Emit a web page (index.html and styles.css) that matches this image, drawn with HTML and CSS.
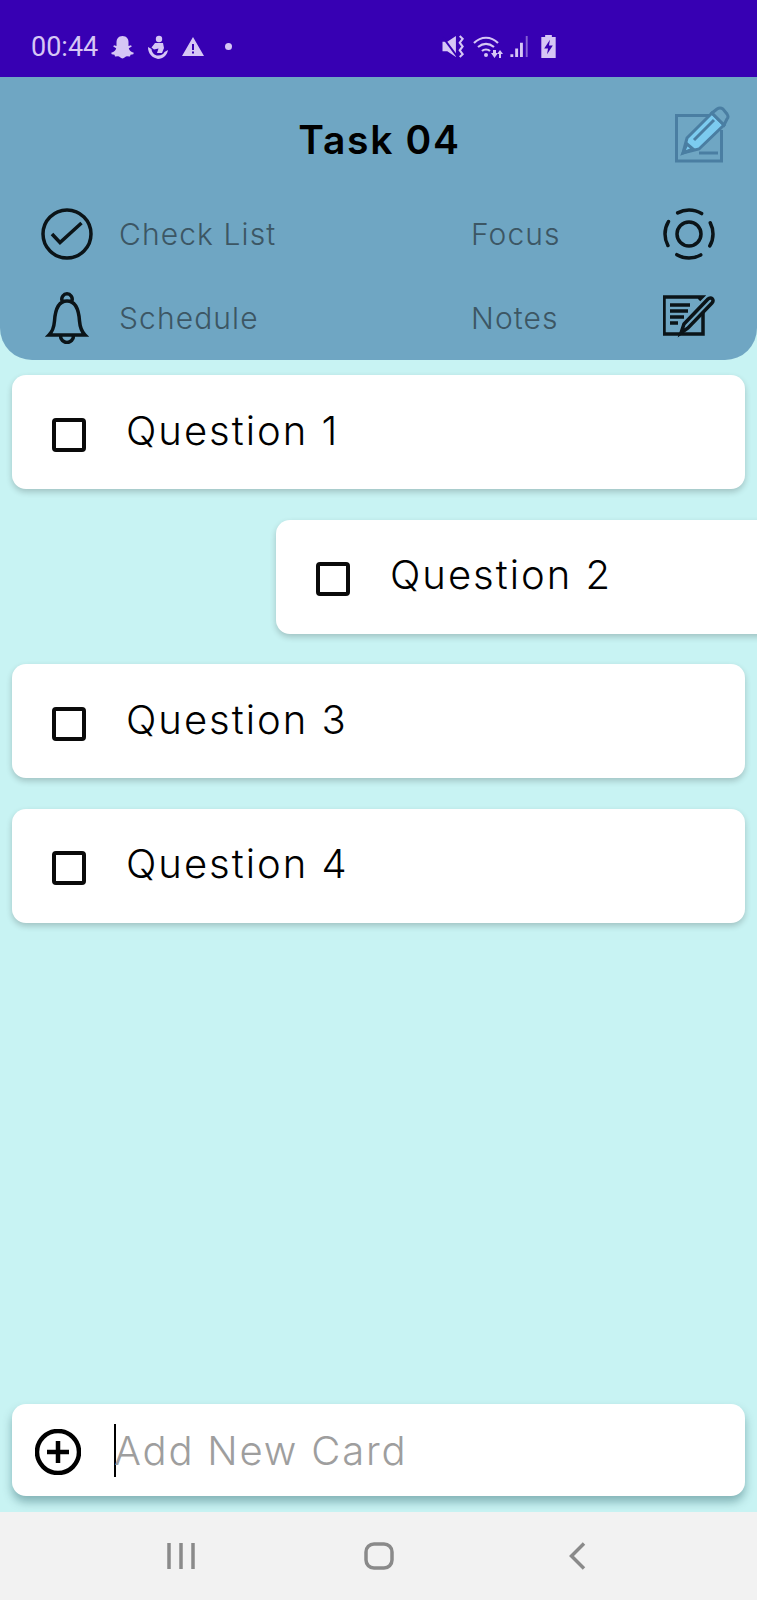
FILE: index.html
```html
<!DOCTYPE html>
<html lang="en">

<head>
    <meta charset="UTF-8">
    <meta name="viewport" content="width=device-width, initial-scale=1.0">
    <title>Task 04</title>
    <link rel="stylesheet" href="styles.css">
</head>

<body>
    <div class="status-bar">
        <div class="status-left">
            <span class="time">00:44</span>
            <svg class="st-ghost" viewBox="0 0 24 24"><path d="M12 1c4 0 6 3 6 6v4l2.500-.8.800 1.300-3 1.800c.5 2 2 3.500 5 4.500l-.5 1.400-2.800.6-.5 1.700-3-.2c-1.500 0-2.500 2.200-4.500 2.200s-3-2.200-4.500-2.200l-3 .2-.5-1.700-2.800-.6-.5-1.400c3-1 4.500-2.500 5-4.500l-3-1.800.8-1.300L6 11V7c0-3 2-6 6-6z"/></svg>
            <svg class="st-anchor" viewBox="0 0 20 24"><circle cx="11" cy="4" r="3.200"/><path d="M7 8h8l1 5-2 5H9l1.500-4.500-4.500 1-2.500-2z"/><path d="M0 12c0 7 4 10.500 10 12 5-.5 9-3.500 10-9l-3.500 2c-1 2-3 3.500-6.500 3.500S4 18 3.500 14z"/></svg>
            <svg class="st-warn" viewBox="0 0 22 19"><path fill-rule="evenodd" d="M11 0l11 19H0zM10 7v6h2V7zM10 14.500v2h2v-2z"/></svg>
            <span class="st-dot"></span>
        </div>
        <div class="status-right">
            <svg class="st-mute" viewBox="0 0 24 24"><path d="M0 7h5l9-6v22l-9-6H0z"/><path d="M0 2l15 20" stroke="#3700b3" stroke-width="2"/><path class="wave" d="M18 1l3 3-3 4 3 4-3 4 3 4-3 3"/></svg>
            <svg class="st-wifi" viewBox="0 0 30 24"><path class="wave" d="M1 8c7-7 17-7 24 0M5 12c5-4 11-4 16 0M9 16c2-2 6-2 8 0"/><circle cx="13" cy="20" r="2"/><path d="M20 19h3v-4h-3zM18 18l3.500 5 3.500-5zM26 19h2v4h-2zM24 19l3-4 3 4z"/></svg>
            <svg class="st-signal" viewBox="0 0 20 24"><path d="M0 20h3v3H0zM5 14h3v9H5zM10 8h3v15h-3z"/><path opacity=".5" d="M16 1h2v22h-2z"/></svg>
            <svg class="st-batt" viewBox="0 0 15 24"><path fill-rule="evenodd" d="M4 0h7v2h4v22H0V2h4zM9 5L3 14h4l-1 6 6-9H8z"/></svg>
        </div>
    </div>

    <header class="task-header">
        <div class="title-row">
            <h1>Task 04</h1>
            <svg class="edit-icon" viewBox="0 0 56 58">
                <path class="edit-box" d="M38 9.500H2.500V55h45V24"/>
                <path class="edit-line" d="M25 47h19"/>
                <path class="edit-pen" d="M9 47l4-15L38 7l12 12-25 24z"/>
                <path class="edit-cap" d="M38 7l5-4q3-2 6 0l4 5q2 3 0 5l-3 6z"/>
                <path class="edit-line" d="M20 34l20-20M9 47l4-9 6 5z"/>
            </svg>
        </div>
        <div class="tool-row">
            <div class="tool">
                <svg class="tool-icon" viewBox="0 0 52 52"><circle cx="26" cy="26" r="24"/><path d="M11 26l8 8.500L40.500 15"/></svg>
                <span>Check List</span>
            </div>
            <div class="tool tool-right">
                <span>Focus</span>
                <svg class="tool-icon" viewBox="0 0 52 52"><circle cx="26" cy="26" r="12"/><circle class="focus-ring" cx="26" cy="26" r="24"/></svg>
            </div>
        </div>
        <div class="tool-row tool-row-last">
            <div class="tool">
                <svg class="tool-icon" viewBox="0 0 52 52"><path d="M8 43h36c-3-3-5-8-5.500-14-.5-8-2-20-12.500-20s-12 12-12.500 20c-.5 6-2.500 11-5.500 14zM21 8.500a5.200 5.200 0 1 1 10 0M19.500 44a6.500 6.500 0 0 0 13 0"/></svg>
                <span>Schedule</span>
            </div>
            <div class="tool tool-right">
                <span>Notes</span>
                <svg class="tool-icon" viewBox="0 0 52 52"><path d="M40 20v22H1V5h38l-3 3M7 13h20M7 19h18M7 25h14M7 31h8"/><path d="M18 41l3-9 24-25c3-3 7 1 4 4L25 36z"/></svg>
            </div>
        </div>
    </header>

    <main class="board">
        <section class="card-list">
            <article class="card"><span class="box"></span><span class="card-text">Question 1</span></article>
            <article class="card card-swiped"><span class="box"></span><span class="card-text">Question 2</span></article>
            <article class="card"><span class="box"></span><span class="card-text">Question 3</span></article>
            <article class="card"><span class="box"></span><span class="card-text">Question 4</span></article>
        </section>
        <div class="new-card">
            <svg class="plus" viewBox="0 0 46 46"><circle cx="23" cy="23" r="21"/><path d="M23 12v22M12 23h22"/></svg>
            <span class="caret"></span>
            <span class="placeholder">Add New Card</span>
        </div>
    </main>

    <nav class="nav-bar">
        <svg class="nav-recent" viewBox="0 0 28 28"><path d="M2 1v26M14 1v26M26 1v26"/></svg>
        <svg class="nav-home" viewBox="0 0 30 28"><rect x="2" y="2" width="26" height="24" rx="8"/></svg>
        <svg class="nav-back" viewBox="0 0 17 28"><path d="M15 1.500L2.500 14 15 26.500"/></svg>
    </nav>
</body>

</html>
```

FILE: styles.css
```css
* {
    box-sizing: border-box;
}

html,
body {
    margin: 0;
    height: 1600px;
    overflow: hidden;
}

body {
    display: flex;
    flex-direction: column;
    background-color: #c8f3f3;
    font-family: 'Inter', 'Liberation Sans', sans-serif;
}

/* status bar */
.status-bar {
    height: 77px;
    flex-shrink: 0;
    background-color: #3700b3;
    display: flex;
    align-items: center;
    padding: 16px 0 0 31px;
}

.status-left,
.status-right {
    display: flex;
    align-items: center;
}

.status-left {
    width: 411px;
}

.status-bar svg {
    fill: #d6c6f5;
    display: block;
}

.status-bar .wave {
    fill: none;
    stroke: #d6c6f5;
    stroke-width: 2.2;
}

.time {
    font-family: 'Roboto', sans-serif;
    font-size: 27px;
    color: #d6c6f5;
    width: 79px;
}

.st-ghost {
    width: 25px;
    height: 24px;
}

.st-anchor {
    width: 20px;
    height: 24px;
    margin-left: 13px;
}

.st-warn {
    width: 22px;
    height: 19px;
    margin-left: 14px;
}

.st-dot {
    width: 7px;
    height: 7px;
    border-radius: 50%;
    background-color: #d6c6f5;
    margin-left: 21px;
}

.st-mute {
    width: 24px;
    height: 23px;
}

.st-wifi {
    width: 30px;
    height: 24px;
    margin-left: 7px;
}

.st-signal {
    width: 20px;
    height: 23px;
    margin-left: 7px;
}

.st-batt {
    width: 15px;
    height: 23px;
    margin-left: 11px;
}

/* header */
.task-header {
    height: 283px;
    flex-shrink: 0;
    background-color: #6fa6c3;
    border-radius: 0 0 32px 32px;
}

.title-row {
    height: 114px;
    display: flex;
    align-items: center;
    justify-content: center;
    position: relative;
}

h1 {
    margin: 10px 0 0 2px;
    font-size: 39px;
    font-weight: 600;
    letter-spacing: 1.7px;
    color: #000;
}

/* sits over the centred title row */
.edit-icon {
    position: absolute;
    right: 27px;
    top: 29px;
    width: 56px;
    height: 58px;
    fill: none;
    stroke: #4a7ea2;
    stroke-width: 3;
}

.edit-pen {
    fill: #7ccbef;
}

.edit-cap {
    fill: #6fa6c3;
}

.tool-row {
    height: 85px;
    display: flex;
    justify-content: space-between;
    padding: 0 42px 0 41px;
}

.tool-row-last {
    height: 83px;
}

.tool {
    display: flex;
    align-items: center;
    gap: 26px;
    font-size: 30px;
    font-weight: 300;
    letter-spacing: 1.1px;
    color: #3c5664;
}

.tool-right {
    width: 244px;
    justify-content: space-between;
}

.tool-icon {
    width: 52px;
    height: 52px;
    fill: none;
    stroke: #0b1418;
    stroke-width: 3.500;
}

.focus-ring {
    stroke-width: 3.500;
    stroke-linecap: round;
    stroke-dasharray: 25 12.700;
    stroke-dashoffset: 12.500;
}

/* cards */
.board {
    flex: 1;
    display: flex;
    flex-direction: column;
    justify-content: space-between;
    padding: 15px 12px 16px;
}

.card-list {
    display: flex;
    flex-direction: column;
    gap: 30.6px;
}

.card,
.new-card {
    background-color: white;
    border-radius: 14px;
    display: flex;
    align-items: center;
    box-shadow: 0 3px 6px rgba(0, 0, 0, 0.2);
}

.card {
    height: 114px;
    padding-left: 40px;
    gap: 40px;
}

.card-swiped {
    margin-left: 264px;
    margin-right: -276px;
}

.box {
    width: 34px;
    height: 34px;
    border: 4px solid #0a0a0a;
    border-radius: 4px;
    margin-top: 5px;
}

.card-text {
    font-size: 40px;
    font-weight: 300;
    letter-spacing: 2px;
    color: #000;
    margin-bottom: 4px;
}

/* add new card */
.new-card {
    height: 92px;
    padding-left: 23px;
    box-shadow: 0 6px 10px rgba(0, 60, 70, 0.35);
}

.plus {
    width: 46px;
    height: 46px;
    fill: none;
    stroke: #000;
    stroke-width: 4.500;
    margin-top: 4px;
}

.caret {
    width: 2px;
    height: 53px;
    background-color: #000;
    margin-left: 33px;
}

.placeholder {
    font-size: 40px;
    font-weight: 300;
    letter-spacing: 1.8px;
    color: #9e9e9e;
    margin-left: -2px;
}

/* system navigation */
.nav-bar {
    height: 88px;
    flex-shrink: 0;
    background-color: #f2f2f2;
    display: flex;
    align-items: center;
    padding-left: 167px;
}

.nav-bar svg {
    fill: none;
    stroke: #8a8a8a;
    stroke-width: 3.500;
    display: block;
}

.nav-recent {
    width: 28px;
    height: 28px;
}

.nav-home {
    width: 30px;
    height: 28px;
    margin-left: 169px;
}

.nav-back {
    width: 17px;
    height: 28px;
    margin-left: 175px;
}
```
